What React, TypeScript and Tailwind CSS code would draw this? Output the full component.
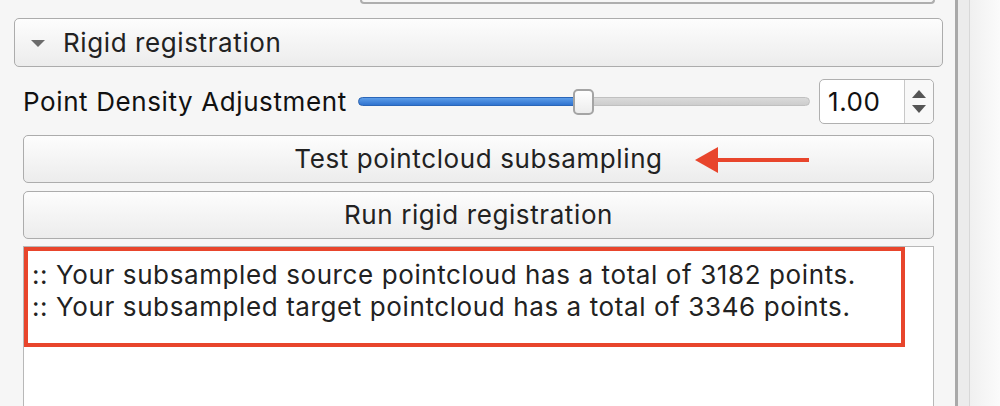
import React from 'react';

const font = "font-['Inter','Noto_Sans',sans-serif] tracking-[0.6px]";

function QtButton({ children }: { children: React.ReactNode }) {
  return (
    <div className="h-[48px] w-full rounded-[5px] border border-[#acacac] bg-gradient-to-b from-[#fdfdfd] to-[#ececec] flex items-center justify-center text-[26px] text-[#222222] leading-none">
      {children}
    </div>
  );
}

export default function App() {
  return (
    <div className={`w-[1000px] h-[406px] overflow-hidden bg-[#f6f6f6] flex ${font}`}>
      {/* main panel */}
      <div className="w-[955px] flex flex-col">
        {/* bottom edge of previous widget */}
        <div className="ml-[360px] w-[575px] h-[4px] border-x-2 border-b-2 border-[#aeaeae] rounded-b-[6px]" />

        {/* collapsible header */}
        <div className="mt-[14px] ml-[14px] w-[929px] h-[49px] rounded-[5px] border border-[#acacac] bg-gradient-to-b from-[#fdfdfd] to-[#ececec] flex items-center">
          <svg width="16" height="10" viewBox="0 0 16 10" className="ml-[15px]">
            <polygon points="1,2 15,2 8,9" fill="#6b6b6b" />
          </svg>
          <span className="ml-[17px] text-[26px] text-[#222222] leading-none">Rigid registration</span>
        </div>

        {/* slider row */}
        <div className="mt-[12px] ml-[23px] w-[911px] h-[45px] flex items-center">
          <span className="text-[26px] text-[#111111] whitespace-nowrap leading-none w-[335px]">Point Density Adjustment</span>
          <div className="relative w-[452px] h-[26px] flex items-center">
            <div className="w-full h-[9px] rounded-full bg-gradient-to-b from-[#dadada] to-[#cdcdcd] border border-[#c0c0c0]" />
            <div className="absolute left-0 w-[222px] h-[9px] rounded-l-full bg-gradient-to-b from-[#5d9de8] to-[#2f73d0] border border-[#2b66b8]" />
            <div className="absolute left-[215px] top-0 w-[21px] h-[26px] rounded-[5px] border-2 border-[#a4a4a4] bg-gradient-to-b from-[#ffffff] to-[#ececec]" />
          </div>
          <div className="ml-[9px] w-[115px] h-[45px] rounded-[5px] border border-[#b0b0b0] bg-white flex">
            <div className="flex-1 flex items-center pl-[8px] text-[26px] text-[#111111] leading-none">1.00</div>
            <div className="w-[29px] border-l border-[#c8c8c8] flex flex-col items-center justify-center gap-[7px] bg-[#f8f8f8] rounded-r-[5px]">
              <svg width="14" height="8" viewBox="0 0 14 8">
                <polygon points="7,0 14,8 0,8" fill="#555555" />
              </svg>
              <svg width="14" height="8" viewBox="0 0 14 8">
                <polygon points="0,0 14,0 7,8" fill="#555555" />
              </svg>
            </div>
          </div>
        </div>

        {/* buttons */}
        <div className="mt-[11px] ml-[23px] w-[911px] flex flex-col gap-[8px]">
          <div className="relative">
            <QtButton>Test pointcloud subsampling</QtButton>
            <svg width="120" height="26" viewBox="0 0 120 26" className="absolute left-[672px] top-[12px]">
              <polygon points="23,0 23,26 0,13" fill="#e8452c" />
              <rect x="20" y="11" width="94" height="4" fill="#e8452c" />
            </svg>
          </div>
          <QtButton>Run rigid registration</QtButton>
        </div>

        {/* log output */}
        <div className="mt-[7px] ml-[23px] w-[911px] flex-1 bg-white border border-[#b8b8b8] border-b-0">
          <div className="w-[881px] h-[100px] border-[4px] border-[#e8452c] pl-[4px] pt-[8px] text-[26px] text-[#222222] leading-[32px] whitespace-nowrap">
            <div>:: Your subsampled source pointcloud has a total of 3182 points.</div>
            <div>:: Your subsampled target pointcloud has a total of 3346 points.</div>
          </div>
        </div>
      </div>

      {/* scrollbar strip */}
      <div className="w-[3px] bg-[#a9a9a9]" />
      <div className="w-[12px] bg-[#ececec] border-r border-[#d8d8d8]" />
      <div className="flex-1 bg-gradient-to-r from-[#f0f0f0] to-[#fbfbfb]" />
    </div>
  );
}
